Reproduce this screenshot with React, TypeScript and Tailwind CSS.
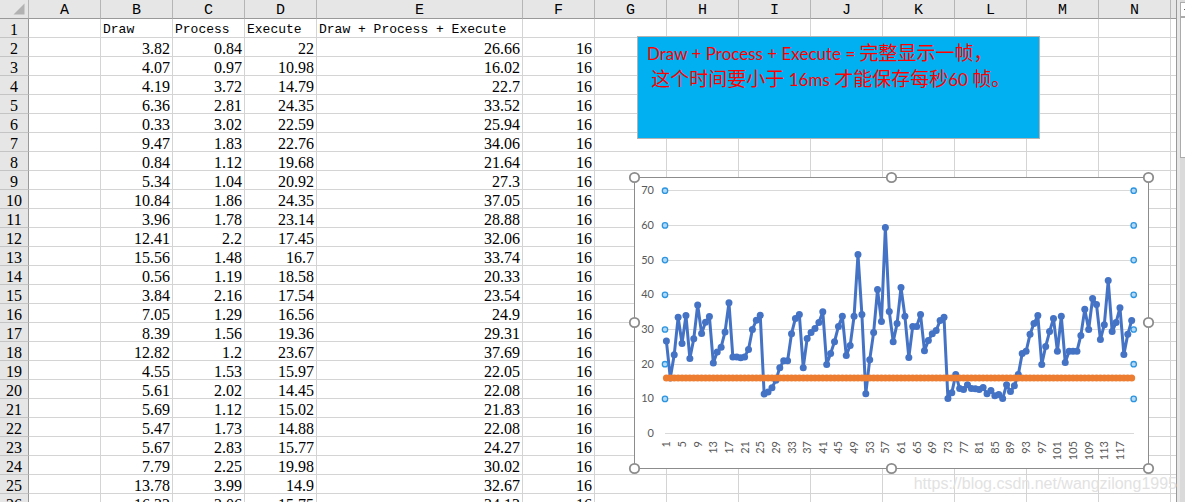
import React from 'react';

const columns = ['A', 'B', 'C', 'D', 'E', 'F', 'G', 'H', 'I', 'J', 'K', 'L', 'M', 'N'];

const titles = ['', 'Draw', 'Process', 'Execute', 'Draw + Process + Execute'];

const samples = [
  ['3.82', '0.84', '22', '26.66'],
  ['4.07', '0.97', '10.98', '16.02'],
  ['4.19', '3.72', '14.79', '22.7'],
  ['6.36', '2.81', '24.35', '33.52'],
  ['0.33', '3.02', '22.59', '25.94'],
  ['9.47', '1.83', '22.76', '34.06'],
  ['0.84', '1.12', '19.68', '21.64'],
  ['5.34', '1.04', '20.92', '27.3'],
  ['10.84', '1.86', '24.35', '37.05'],
  ['3.96', '1.78', '23.14', '28.88'],
  ['12.41', '2.2', '17.45', '32.06'],
  ['15.56', '1.48', '16.7', '33.74'],
  ['0.56', '1.19', '18.58', '20.33'],
  ['3.84', '2.16', '17.54', '23.54'],
  ['7.05', '1.29', '16.56', '24.9'],
  ['8.39', '1.56', '19.36', '29.31'],
  ['12.82', '1.2', '23.67', '37.69'],
  ['4.55', '1.53', '15.97', '22.05'],
  ['5.61', '2.02', '14.45', '22.08'],
  ['5.69', '1.12', '15.02', '21.83'],
  ['5.47', '1.73', '14.88', '22.08'],
  ['5.67', '2.83', '15.77', '24.27'],
  ['7.79', '2.25', '19.98', '30.02'],
  ['13.78', '3.99', '14.9', '32.67'],
  ['16.32', '2.06', '15.75', '34.13'],
];

const totals = [
  26.66, 16.02, 22.7, 33.52, 25.94, 34.06, 21.64, 27.3, 37.05, 28.88, 32.06, 33.74, 20.33, 23.54, 24.9,
  29.31, 37.69, 22.05, 22.08, 21.83, 22.08, 24.27, 30.02, 32.67, 34.1, 11.4, 12, 13.2, 15.4, 19,
  21, 21, 28.8, 33.2, 34.3, 19, 27.4, 29.1, 30.3, 32, 35.1, 19.9, 23.1, 26.5, 30.9,
  33.8, 22.5, 25.4, 33.8, 51.6, 34.3, 11.5, 21.3, 29.1, 41.5, 32.3, 59.4, 35.2, 26.5, 31.7,
  42.1, 33.8, 21.9, 30.9, 30.9, 34.3, 23.9, 26.8, 28.8, 29.7, 32.6, 33.5, 10.1, 11.8, 17,
  13, 12.7, 14.1, 13, 12.9, 12.7, 13.3, 11.5, 12.4, 10.9, 11.3, 10.1, 14.1, 12.1, 13.8,
  17, 23.1, 23.7, 28.6, 31.7, 34, 19.9, 25.1, 29.4, 33.2, 23.7, 33.8, 20.5, 23.7, 23.7,
  23.7, 28.3, 35.8, 30, 38.9, 37.2, 27.1, 31.4, 44.1, 29.4, 32, 36.3, 22.8, 28.6, 32.6,
];

const LIMIT = 16;
const pointX = (i: number) => 32.4 + i * 3.91;
const pointY = (v: number) => 256.6 - v * 3.47;

const ticks = [0, 10, 20, 30, 40, 50, 60, 70];
const labels = Array.from({ length: 30 }, (_, i) => i * 4 + 1);

function Sheet() {
  return (
    <table className="w-full table-fixed border-separate border-spacing-0 border-r border-[#999999] text-black">
      <colgroup>
        <col className="w-[29px]" />
        {columns.map((c) => (
          <col key={c} className={c === 'E' ? 'w-[206px]' : 'w-[72px]'} />
        ))}
        <col />
      </colgroup>
      <thead>
        <tr className="h-[19px] bg-[#e6e6e6] font-['Liberation_Mono',monospace] text-[15px] leading-[14px]">
          <th className="border-r border-b border-r-[#b5b5b5] border-b-[#999999] p-0">
            <svg className="ml-auto mr-[3px] block h-[12px] w-[12px]" viewBox="0 0 12 12" aria-label="Select all">
              <path d="M11.5 0.5V11.5H0.5Z" fill="#b2b2b2" />
            </svg>
          </th>
          {columns.map((c) => (
            <th key={c} className="border-r border-b border-r-[#b5b5b5] border-b-[#999999] p-0 pt-1 font-normal">
              {c}
            </th>
          ))}
          <th className="border-b border-[#999999] p-0" />
        </tr>
      </thead>
      <tbody className="font-['Liberation_Serif',serif] text-base leading-[14px]">
        <tr className="h-[19px]">
          <RowHeader n={1} />
          {columns.map((c, i) => (
            <td
              key={c}
              className="border-r border-b border-[#d4d4d4] p-0 pt-1 pl-0.5 font-['Liberation_Mono',monospace] text-[13px] whitespace-nowrap"
            >
              {titles[i]}
            </td>
          ))}
          <td className="border-b border-[#d4d4d4] p-0" />
        </tr>
        {samples.map((s, r) => {
          const cells = ['', ...s, String(LIMIT)];
          return (
            <tr key={r} className="h-[19px]">
              <RowHeader n={r + 2} />
              {columns.map((c, i) => (
                <td key={c} className="border-r border-b border-[#d4d4d4] p-0 pt-1 pr-0.5 text-right">
                  {cells[i]}
                </td>
              ))}
              <td className="border-b border-[#d4d4d4] p-0" />
            </tr>
          );
        })}
      </tbody>
    </table>
  );
}

function RowHeader({ n }: { n: number }) {
  return (
    <th className="border-r border-b border-r-[#999999] border-b-[#c4c4c4] bg-[#e6e6e6] p-0 pt-1 text-center font-normal">
      {n}
    </th>
  );
}

function Note() {
  return (
    <div className="absolute top-9 left-[637px] h-[103px] w-[403px] border border-[#b3b3b3] bg-[#00b0f0] py-[3px] pl-[9px] font-['Lato','Noto_Sans_CJK_SC',sans-serif] text-[17px] leading-[25px] whitespace-pre text-[#ff0000]">
      <p>
        Draw + Process + Execute = <Han>完整显示一帧，</Han>
      </p>
      <p>
        {' '}
        <Han>这个时间要小于</Han> 16ms <Han>才能保存每秒</Han>60 <Han>帧。</Han>
      </p>
    </div>
  );
}

function Han({ children }: { children: React.ReactNode }) {
  return <span className="text-[19px]">{children}</span>;
}

function Chart() {
  const line = totals.map((v, i) => `${pointX(i)},${pointY(v)}`).join(' ');
  const handles = [
    [0.5, 0.5], [257.5, 0.5], [514.5, 0.5],
    [0.5, 145.5], [514.5, 145.5],
    [0.5, 291.5], [257.5, 291.5], [514.5, 291.5],
  ];
  return (
    <svg
      className="absolute top-[177px] left-[634px] h-[292px] w-[515px] overflow-visible font-['Lato',sans-serif] text-[11px]"
      viewBox="0 0 515 292"
      role="img"
      aria-label="Frame time"
    >
      <rect x="0.5" y="0.5" width="514" height="291" fill="#fff" stroke="#8c8c8c" />
      {ticks.map((t) => {
        const y = Math.floor(pointY(t)) + 0.5;
        return (
          <g key={t}>
            <path d={`M31 ${y}H500`} stroke="#d9d9d9" />
            <text x="20" y={y + 3.5} textAnchor="end" fill="#595959">
              {t}
            </text>
          </g>
        );
      })}
      <polyline points={line} fill="none" stroke="#4472c4" strokeWidth="3" strokeLinejoin="round" />
      {totals.map((v, i) => (
        <circle key={i} cx={pointX(i)} cy={pointY(v)} r="3.5" fill="#4472c4" />
      ))}
      <path d={`M${pointX(0)} ${pointY(LIMIT)}H${pointX(119)}`} stroke="#ed7d31" strokeWidth="5.4" />
      {totals.map((_, i) => (
        <circle key={i} cx={pointX(i)} cy={pointY(LIMIT)} r="3.5" fill="#ed7d31" />
      ))}
      {labels.map((n) => (
        <text
          key={n}
          transform={`translate(${pointX(n - 1) + 4} 264) rotate(-90)`}
          textAnchor="end"
          fill="#595959"
        >
          {n}
        </text>
      ))}
      {ticks.slice(1).map((t) => (
        <g key={t} fill="#b4d9f5" stroke="#2b95e0" strokeWidth="1.3">
          <circle cx="31" cy={pointY(t)} r="2.7" />
          <circle cx="499.7" cy={pointY(t)} r="2.7" />
        </g>
      ))}
      {handles.map(([x, y]) => (
        <circle key={`${x}-${y}`} cx={x} cy={y} r="4.7" fill="#fff" stroke="#8c8c8c" strokeWidth="1.8" />
      ))}
    </svg>
  );
}

function ScrollBar() {
  return (
    <div className="flex w-2 shrink-0 flex-col bg-[#e6e6e6] pl-[3px]">
      <div className="flex h-full flex-col bg-[#dadada] pt-0.5">
        <button
          type="button"
          aria-label="Scroll up"
          className="flex h-[15px] shrink-0 items-center justify-end border border-r-0 border-[#ababab] bg-white"
        >
          <svg className="h-px w-px" viewBox="0 0 1 1" aria-hidden="true">
            <path d="M0 0H1V1H0Z" fill="#606060" />
          </svg>
        </button>
        <div className="h-[141px] shrink-0 border border-r-0 border-[#ababab] bg-white" />
      </div>
    </div>
  );
}

export default function App() {
  return (
    <main className="relative flex h-screen overflow-hidden bg-white">
      <div className="min-w-0 flex-1">
        <Sheet />
      </div>
      <ScrollBar />
      <Note />
      <Chart />
      <p className="absolute right-2 bottom-1.5 font-['Liberation_Sans',sans-serif] text-base leading-6 text-[#e2e2e2]">
        https://blog.csdn.net/wangzilong1995
      </p>
    </main>
  );
}
